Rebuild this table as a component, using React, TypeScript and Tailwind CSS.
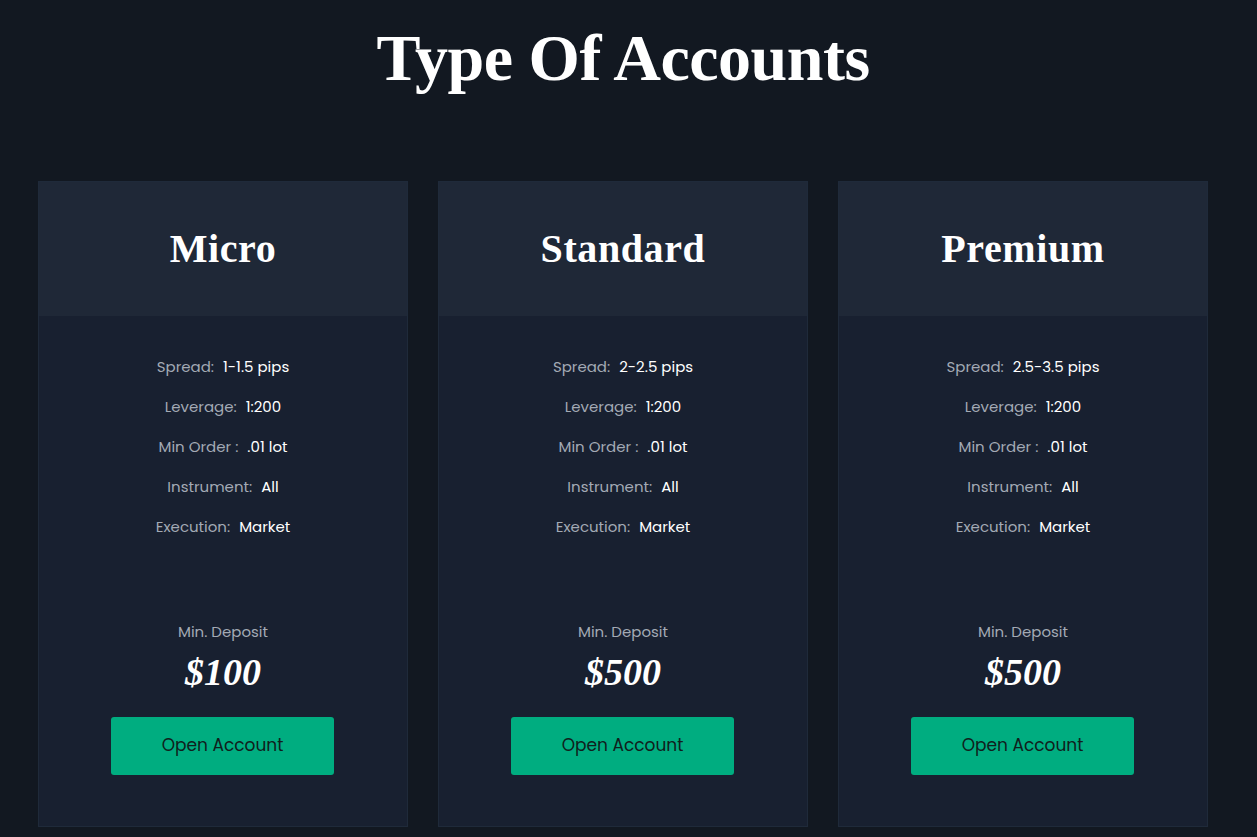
import React from 'react';

const accounts = [
  { name: 'Micro', spread: '1-1.5 pips', deposit: '$100' },
  { name: 'Standard', spread: '2-2.5 pips', deposit: '$500' },
  { name: 'Premium', spread: '2.5-3.5 pips', deposit: '$500' },
];

function Row({ label, value }: { label: string; value: string }) {
  return (
    <div className="flex h-10 items-center justify-center gap-[9px] text-[15px]">
      <span className="text-[#a3aab5]">{label}</span>
      <span className="text-white">{value}</span>
    </div>
  );
}

export default function App() {
  return (
    <main
      className="min-h-screen bg-[#121821] pb-2"
      style={{ fontFamily: 'Poppins, "Noto Sans", sans-serif' }}
    >
      <div className="ml-[38px] w-[1170px]">
        <h1
          className="pt-[18px] text-center text-[66px] font-bold leading-[80px] tracking-[-0.5px] text-white"
          style={{ fontFamily: '"Liberation Serif", serif' }}
        >
          Type Of Accounts
        </h1>

        <div className="mt-[83px] grid grid-cols-3 gap-[30px]">
          {accounts.map((a) => (
            <div
              key={a.name}
              className="flex h-[646px] flex-col border border-[#1f2a3a] bg-[#182030]"
            >
              <div className="flex h-[134px] items-center justify-center bg-[#1f2837]">
                <h2
                  className="text-[40px] font-bold tracking-[0.6px] text-white"
                  style={{ fontFamily: '"Liberation Serif", serif' }}
                >
                  {a.name}
                </h2>
              </div>
              <div className="pt-[31px]">
                <Row label="Spread:" value={a.spread} />
                <Row label="Leverage:" value="1:200" />
                <Row label="Min Order :" value=".01 lot" />
                <Row label="Instrument:" value="All" />
                <Row label="Execution:" value="Market" />
              </div>
              <div className="mt-[74px] flex flex-col items-center">
                <p className="text-[15px] text-[#a3aab5]">Min. Deposit</p>
                <p
                  className="mt-[6px] text-[38px] font-bold italic leading-[44px] text-white"
                  style={{ fontFamily: '"Liberation Serif", serif' }}
                >
                  {a.deposit}
                </p>
                <button className="-ml-[1px] mt-[23px] h-[58px] w-[223px] rounded-[3px] bg-[#00ad80] text-[17px] text-[#10201c]">
                  Open Account
                </button>
              </div>
            </div>
          ))}
        </div>
      </div>
    </main>
  );
}
